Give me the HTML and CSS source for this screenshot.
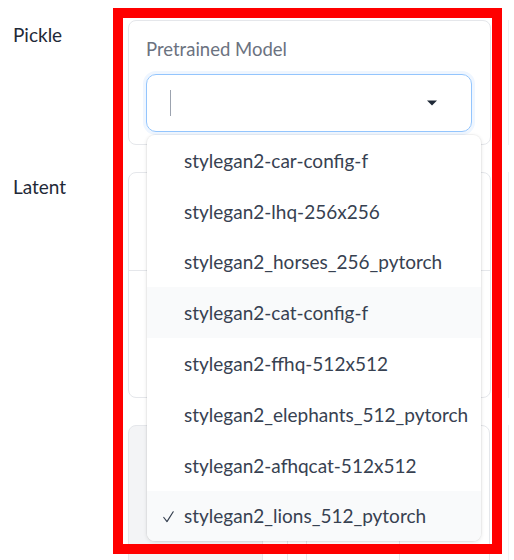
FILE: index.html
```html
<!DOCTYPE html>
<html>
<head>
<meta charset="utf-8">
<link rel="stylesheet" href="styles.css">
</head>
<body>
<div class="page">
  <div class="label">Pickle</div>
  <div class="card card-model">
    <div class="field-label">Pretrained Model</div>
    <div class="select">
      <span class="caret"></span>
      <svg class="chevron" width="10" height="6" viewBox="0 0 10 6"><path d="M0 0.5H10L5 5.5Z" fill="#1f2937"/></svg>
    </div>
    <ul class="menu">
      <li class="item"><span class="check"></span>stylegan2-car-config-f</li>
      <li class="item"><span class="check"></span>stylegan2-lhq-256x256</li>
      <li class="item"><span class="check"></span>stylegan2_horses_256_pytorch</li>
      <li class="item hover"><span class="check"></span>stylegan2-cat-config-f</li>
      <li class="item"><span class="check"></span>stylegan2-ffhq-512x512</li>
      <li class="item"><span class="check"></span>stylegan2_elephants_512_pytorch</li>
      <li class="item"><span class="check"></span>stylegan2-afhqcat-512x512</li>
      <li class="item selected"><span class="check"><svg width="11" height="12" viewBox="0 0 11 12"><path d="M0.8 6.5L4 10.6L10.2 0.8" fill="none" stroke="#374151" stroke-width="1.2" stroke-linecap="round" stroke-linejoin="round"/></svg></span>stylegan2_lions_512_pytorch</li>
    </ul>
  </div>
  <div class="side-card"></div>

  <div class="label">Latent</div>
  <div class="card card-latent">
    <div class="section sec-a"></div>
    <div class="section sec-b"></div>
  </div>
  <div class="side-card"></div>

  <div class="label"></div>
  <div class="bottom-row">
    <div class="gray-box"></div>
    <div class="white-box">
      <div class="wb-inner"></div>
    </div>
  </div>
  <div class="side-card"></div>
</div>
<div class="highlight"></div>
</body>
</html>
```

FILE: styles.css
```css
* { box-sizing: border-box; }
html, body { margin: 0; padding: 0; background: #ffffff; }
body {
  font-family: Lato, "Noto Sans", sans-serif;
  color: #1f2937;
  width: 514px;
  height: 560px;
  overflow: hidden;
  position: relative;
}
.page {
  display: grid;
  grid-template-columns: 128px 363px 1fr;
  row-gap: 27px;
  padding-top: 20px;
}
.label {
  padding-left: 13px;
  padding-top: 3px;
  font-size: 19px;
  line-height: 24px;
  color: #1f2937;
}
.card {
  border: 1px solid #e5e7eb;
  border-radius: 8px;
  background: #fff;
  position: relative;
}
.card-model {
  height: 125px;
  padding: 16px 18px 12px 17px;
}
.field-label {
  font-size: 18.5px;
  line-height: 24px;
  color: #6b7280;
  margin-bottom: 13px;
}
.select {
  height: 58px;
  border: 1px solid #93c5fd;
  border-radius: 10px;
  box-shadow: 0 0 0 3px #eff6ff;
  display: flex;
  align-items: center;
  justify-content: space-between;
  padding: 0 34px 0 23px;
}
.caret {
  width: 1px;
  height: 26px;
  background: #9ca3af;
}
.chevron { display: block; }
.menu {
  position: absolute;
  left: 18px;
  top: 114px;
  width: 334px;
  margin: 0;
  padding: 0;
  list-style: none;
  background: #fff;
  border-radius: 8px;
  box-shadow: 0 1px 4px rgba(0,0,0,0.12), 0 0 0 1px rgba(0,0,0,0.03);
  overflow: hidden;
  z-index: 5;
}
.item {
  height: 50.8px;
  display: flex;
  align-items: center;
  padding-left: 16px;
  font-size: 19px;
  color: #374151;
  white-space: nowrap;
}
.item.hover, .item.selected { background: #f9fafb; }
.check {
  width: 21px;
  flex: none;
  display: flex;
  align-items: center;
  padding-top: 2px;
}
.card-latent {
  height: 226px;
  display: flex;
  flex-direction: column;
}
.sec-a { height: 98px; border-bottom: 1px solid #e5e7eb; }
.sec-b { flex: 1; }
.side-card {
  margin-left: 17px;
  border-left: 1px solid #f0f1f3;
}
.bottom-row {
  display: flex;
  gap: 24px;
  height: 160px;
}
.gray-box {
  width: 135px;
  background: #f3f4f6;
  border: 1px solid #e5e7eb;
  border-radius: 8px;
}
.white-box {
  width: 203px;
  border: 1px solid #e5e7eb;
  border-radius: 8px;
  padding: 0 0 0 18px;
}
.wb-inner {
  margin-top: 114px;
  width: 94px;
  height: 40px;
  border-left: 1px solid #e5e7eb;
  border-right: 1px solid #e5e7eb;
}
.highlight {
  position: absolute;
  left: 113px;
  top: 8px;
  width: 389px;
  height: 546px;
  border: 10px solid #ff0000;
  z-index: 10;
}
```
